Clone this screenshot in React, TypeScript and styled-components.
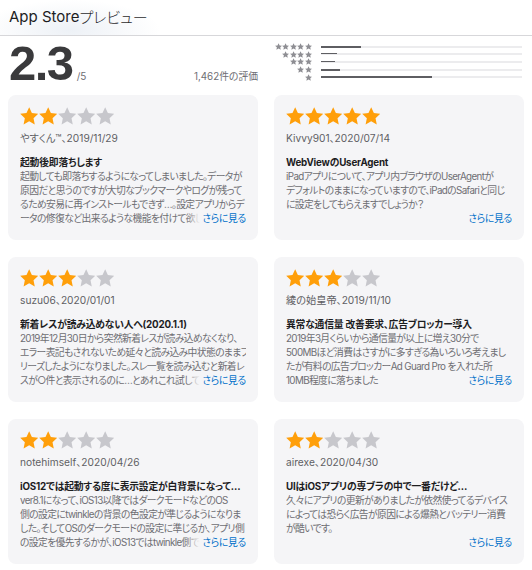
import React from "react";
import styled, { createGlobalStyle } from "styled-components";

const GlobalStyle = createGlobalStyle`
  html, body { margin: 0; padding: 0; background: #fff; }
  body {
    font-family: Inter, "Noto Sans CJK JP", sans-serif;
    -webkit-font-smoothing: antialiased;
  }
  * { box-sizing: border-box; }
`;

const Page = styled.div`
  width: 532px;
  height: 570px;
  overflow: hidden;
  background: #fff;
  font-feature-settings: "palt";
`;

const Header = styled.header`
  height: 36px;
  display: flex;
  align-items: center;
  padding: 0 0 3px 9px;
  border-bottom: 1px solid #d7d7da;
  background: radial-gradient(ellipse 90px 30px at 70px 30px, #edf1f6, rgba(255, 255, 255, 0));
  font-size: 15px;
  color: #1d1d1f;
`;

const HeaderKana = styled.span`
  font-weight: 300;
  color: #2c2c2e;
`;

const Summary = styled.section`
  display: grid;
  grid-template-columns: 250px 250px;
  column-gap: 16px;
  padding: 0 8px;
  height: 58px;
`;

const Score = styled.div`
  display: flex;
  align-items: baseline;
  align-self: end;
  padding: 0 0 6px 1px;
`;

const BigNumber = styled.span`
  font-family: "Liberation Sans", Arial, sans-serif;
  font-weight: 700;
  font-size: 49px;
  line-height: 1;
  letter-spacing: -1.5px;
  color: #3a3a3c;
`;

const OutOf = styled.span`
  margin-left: 4px;
  font-size: 10px;
  color: #6e6e73;
`;

const Count = styled.span`
  margin-left: auto;
  font-size: 9.8px;
  color: #6e6e73;
`;

const Histogram = styled.div`
  display: grid;
  grid-auto-rows: 7.6px;
  padding-top: 7px;
`;

const HistRow = styled.div`
  display: grid;
  grid-template-columns: 38px 1fr;
  column-gap: 9px;
  align-items: center;
`;

const SmallStars = styled.div`
  display: flex;
  justify-content: flex-end;
  gap: 0.6px;
`;

const Track = styled.div`
  height: 2px;
  background: #ececee;
  margin-right: 2px;
`;

const Fill = styled.div<{ $thin?: boolean }>`
  height: ${(p) => (p.$thin ? "1px" : "2px")};
  background: #5e5e62;
`;

const Cards = styled.section`
  display: grid;
  grid-template-columns: 250px 250px;
  grid-auto-rows: 145px;
  column-gap: 16px;
  row-gap: 17px;
  padding: 1px 8px 0;
`;

const Card = styled.article`
  background: #f5f5f7;
  border-radius: 8px;
  padding: 12px 12px 0 12px;
  display: flex;
  flex-direction: column;
`;

const StarRow = styled.div`
  display: flex;
  gap: 1px;
  height: 18px;
`;

const Author = styled.div`
  margin-top: 6px;
  font-size: 10.2px;
  line-height: 14px;
  color: #5f5f64;
`;

const Title = styled.div`
  margin-top: 11px;
  font-size: 9.8px;
  letter-spacing: -0.2px;
  line-height: 14px;
  font-weight: 700;
  color: #1d1d1f;
  white-space: nowrap;
  overflow: hidden;
  text-overflow: ellipsis;
`;

const Body = styled.div`
  position: relative;
  height: 56px;
  overflow: hidden;
  font-size: 9.8px;
  letter-spacing: -0.62px;
  line-height: 14px;
  color: #6e6e73;
`;

const Line = styled.span`
  display: block;
  white-space: nowrap;
`;

const More = styled.span`
  position: absolute;
  right: 0;
  bottom: 0;
  line-height: 14px;
  padding-left: 16px;
  letter-spacing: -0.3px;
  background: linear-gradient(to right, rgba(245, 245, 247, 0), #f5f5f7 14px);
  color: #0070c9;
`;

const STAR_PATH =
  "M12 2l2.94 6.26 6.86.82-5.07 4.7 1.35 6.78L12 17.2l-6.08 3.36 1.35-6.78L2.2 9.08l6.86-.82z";

const Star = ({ size, color }: { size: number; color: string }) => (
  <svg width={size} height={size} viewBox="2 1.6 19.6 19.6" aria-hidden>
    <path d={STAR_PATH} fill={color} />
  </svg>
);

const histogram = [
  { stars: 5, pct: 20 },
  { stars: 4, pct: 7.8, thin: true },
  { stars: 3, pct: 6.9, thin: true },
  { stars: 2, pct: 9.3 },
  { stars: 1, pct: 55 },
];

type Review = {
  rating: number;
  author: string;
  title: string;
  lines: string[];
};

const reviews: Review[] = [
  {
    rating: 2,
    author: "やすくん™、2019/11/29",
    title: "起動後即落ちします",
    lines: [
      "起動しても即落ちするようになってしまいました。データが",
      "原因だと思うのですが大切なブックマークやログが残って",
      "るため安易に再インストールもできず…。設定アプリからデ",
      "ータの修復など出来るような機能を付けて欲しいです。",
    ],
  },
  {
    rating: 5,
    author: "Kivvy901、2020/07/14",
    title: "WebViewのUserAgent",
    lines: [
      "iPadアプリについて、アプリ内ブラウザのUserAgentが",
      "デフォルトのままになっていますので、iPadのSafariと同じ",
      "に設定をしてもらえますでしょうか？",
    ],
  },
  {
    rating: 3,
    author: "suzu06、2020/01/01",
    title: "新着レスが読み込めない人へ(2020.1.1)",
    lines: [
      "2019年12月30日から突然新着レスが読み込めなくなり、",
      "エラー表記もされないため延々と読み込み中状態のままフ",
      "リーズしたようになりました。スレ一覧を読み込むと新着レ",
      "スが○件と表示されるのに…とあれこれ試してみましたが",
    ],
  },
  {
    rating: 3,
    author: "綾の始皇帝、2019/11/10",
    title: "異常な通信量 改善要求、広告ブロッカー導入",
    lines: [
      "2019年3月くらいから通信量が以上に増え30分で",
      "500MBほど消費はさすがに多すぎる為いろいろ考えまし",
      "たが有料の広告ブロッカーAd Guard Pro を入れた所",
      "10MB程度に落ちました",
    ],
  },
  {
    rating: 2,
    author: "notehimself、2020/04/26",
    title: "iOS12では起動する度に表示設定が白背景になってしまう問題",
    lines: [
      "ver8.1になって、iOS13以降ではダークモードなどのOS",
      "側の設定にtwinkleの背景の色設定が準じるようになりま",
      "した。そしてOSのダークモードの設定に準じるか、アプリ側",
      "の設定を優先するかが、iOS13ではtwinkle側で選べます",
    ],
  },
  {
    rating: 2,
    author: "airexe、2020/04/30",
    title: "UIはiOSアプリの専ブラの中で一番だけど…",
    lines: [
      "久々にアプリの更新がありましたが依然使ってるデバイス",
      "によっては恐らく広告が原因による爆熱とバッテリー消費",
      "が酷いです。",
    ],
  },
];

export default function App() {
  return (
    <Page>
      <GlobalStyle />
      <Header>
        App Store<HeaderKana>プレビュー</HeaderKana>
      </Header>
      <Summary>
        <Score>
          <BigNumber>2.3</BigNumber>
          <OutOf>/5</OutOf>
          <Count>1,462件の評価</Count>
        </Score>
        <Histogram>
          {histogram.map((h) => (
            <HistRow key={h.stars}>
              <SmallStars>
                {Array.from({ length: h.stars }).map((_, i) => (
                  <Star key={i} size={7} color="#8e8e93" />
                ))}
              </SmallStars>
              <Track>
                <Fill $thin={h.thin} style={{ width: `${h.pct}%` }} />
              </Track>
            </HistRow>
          ))}
        </Histogram>
      </Summary>
      <Cards>
        {reviews.map((r, idx) => (
          <Card key={idx}>
            <StarRow>
              {Array.from({ length: 5 }).map((_, i) => (
                <Star key={i} size={18} color={i < r.rating ? "#ff9f0a" : "#c7c7cc"} />
              ))}
            </StarRow>
            <Author>{r.author}</Author>
            <Title>{r.title}</Title>
            <Body>
              {r.lines.map((l, i) => (
                <Line key={i}>{l}</Line>
              ))}
              <More>さらに見る</More>
            </Body>
          </Card>
        ))}
      </Cards>
    </Page>
  );
}
